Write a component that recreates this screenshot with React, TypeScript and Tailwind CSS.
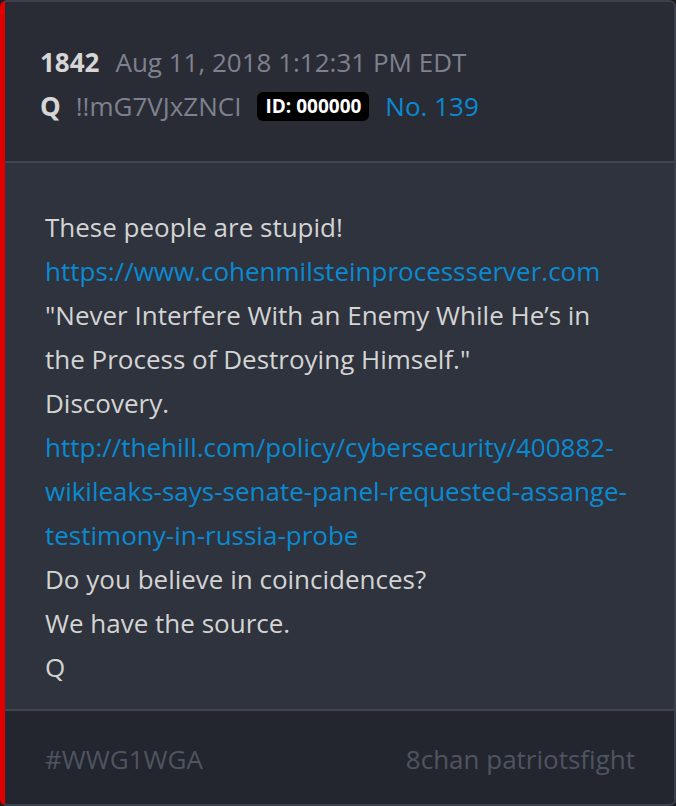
export default function App() {
  const font = { fontFamily: '"Open Sans", sans-serif' };
  return (
    <div className="w-[676px] h-[806px] bg-[#1b1d22]" style={font}>
      <div className="w-[676px] h-[806px] rounded-[7px] border-[2px] border-[#3c404b] border-l-[5px] border-l-[#e00000] overflow-hidden flex flex-col">
        <div className="bg-[#292c34] pl-[35px] pt-[38px] pb-[33px] border-b-[2px] border-[#41454f]">
          <div className="flex items-center h-[44px] text-[26px]">
            <span className="font-bold text-[#d6d6d6]">1842</span>
            <span className="ml-[16px] text-[#7e8190]">Aug 11, 2018 1:12:31 PM EDT</span>
          </div>
          <div className="flex items-center h-[44px] text-[26px]">
            <span className="font-bold text-[#d6d6d6]">Q</span>
            <span className="ml-[15px] text-[#7e8190]">!!mG7VJxZNCI</span>
            <span className="ml-[16px] bg-black text-white font-bold text-[19px] rounded-[6px] px-[8px] h-[29px] flex items-center">ID: 000000</span>
            <span className="ml-[16px] text-[#0a8ad2]">No. 139</span>
          </div>
        </div>
        <div className="bg-[#2e333d] pl-[40px] pr-[40px] pt-[42px] pb-[18px] text-[26px] leading-[44px] text-[#d4d4d4] flex-1">
          <div>These people are stupid!</div>
          <div className="text-[#0a8ad2]">https://www.cohenmilsteinprocessserver.com</div>
          <div>"Never Interfere With an Enemy While He’s in the Process of Destroying Himself."</div>
          <div>Discovery.</div>
          <div className="text-[#0a8ad2]">http://thehill.com/policy/cybersecurity/400882-wikileaks-says-senate-panel-requested-assange-testimony-in-russia-probe</div>
          <div>Do you believe in coincidences?</div>
          <div>We have the source.</div>
          <div>Q</div>
        </div>
        <div className="bg-[#23262e] border-t-[2px] border-[#41454f] h-[95px] pl-[40px] pr-[39px] pt-[4px] flex items-center justify-between text-[26px] text-[#4f5461]">
          <span>#WWG1WGA</span>
          <span>8chan patriotsfight</span>
        </div>
      </div>
    </div>
  );
}
